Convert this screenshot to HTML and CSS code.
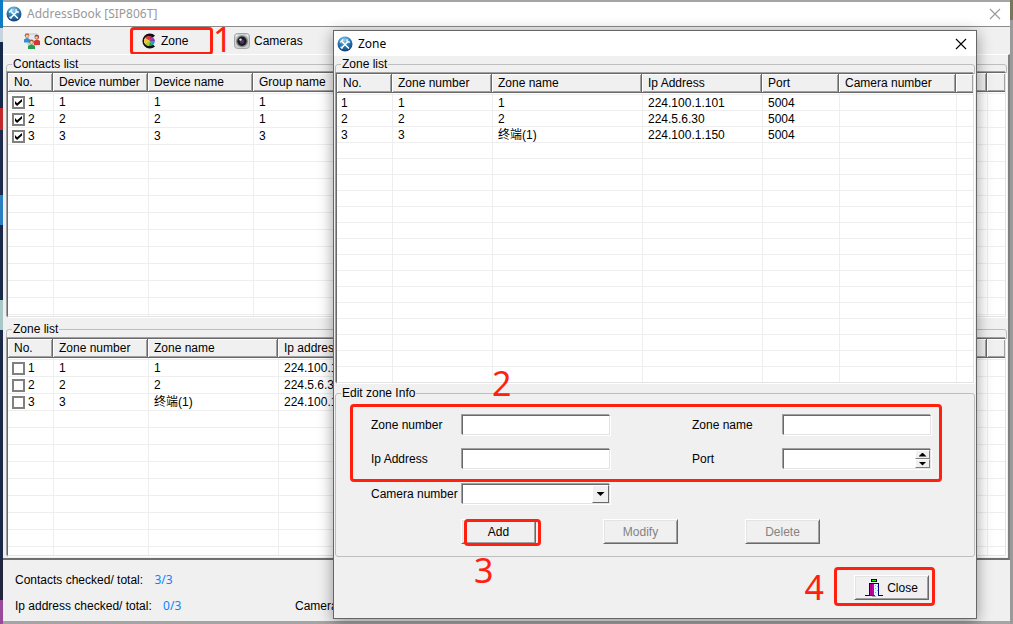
FILE: index.html
```html
<!DOCTYPE html>
<html lang="en">
<head>
<meta charset="utf-8">
<title>AddressBook [SIP806T]</title>
<link rel="stylesheet" href="styles.css">
</head>
<body class="desktop">
<svg width="0" height="0" class="defs" aria-hidden="true">
  <defs>
    <radialGradient id="ball" cx="45%" cy="25%" r="75%">
      <stop offset="0" stop-color="#8fd0ee"/><stop offset=".5" stop-color="#2f7fb8"/><stop offset="1" stop-color="#123f78"/>
    </radialGradient>
    <symbol id="app" viewBox="0 0 16 16">
      <circle cx="8" cy="8" r="7.5" fill="url(#ball)"/>
      <path d="M5 5.500l7 7M11.500 5L4.500 12" stroke="#fff" stroke-width="1.500"/>
      <path d="M3.200 6.400l3-3M10 3.200l.3 2.600 2.600.4M3.600 10.800l1.800 1.800" stroke="#e8f4fb" stroke-width="1.500" fill="none"/>
    </symbol>
    <symbol id="cross" viewBox="0 0 12 12">
      <path d="M1 1l10 10M11 1L1 11" stroke="currentColor" stroke-width="1.1" fill="none"/>
    </symbol>
  </defs>
</svg>

<main class="window">
  <header class="titlebar titlebar-main">
    <svg class="icon"><use href="#app"/></svg>
    <h1 class="title">AddressBook [SIP806T]</h1>
    <button class="x-button" aria-label="Close window"><svg class="cross"><use href="#cross"/></svg></button>
  </header>

  <nav class="toolbar">
    <button class="tool tool-contacts">
      <svg class="icon" viewBox="0 0 16 16">
        <path d="M4 1h9v11H4z" fill="#e4ebf0" stroke="#a9b2bb" stroke-width=".7"/>
        <circle cx="3" cy="2.600" r="2.300" fill="#b5653c"/><circle cx="3.200" cy="3.200" r="1.400" fill="#f4c49b"/>
        <path d="M0 9.500V6.500q3-3 6 0V9.500z" fill="#2f8fd0"/>
        <circle cx="12.800" cy="4" r="2.300" fill="#9a3d22"/><circle cx="12.600" cy="4.600" r="1.400" fill="#f4c49b"/>
        <path d="M10 12V8q3-3 6 0V12z" fill="#d3373a"/>
        <circle cx="7.500" cy="9" r="2.400" fill="#a8582f"/><circle cx="7.500" cy="9.600" r="1.500" fill="#f6cda8"/>
        <path d="M4 16v-3q3.500-3 7 0v3z" fill="#23a047"/>
      </svg>Contacts</button>
    <span class="mark mark-zone"><button class="tool">
      <svg class="icon" viewBox="0 0 16 16">
        <path d="M14 2.500A7.500 7.500 0 1 0 14 13.500L12 11.500H11A4.800 4.800 0 1 1 11 4.500H12Z" fill="#111"/>
        <path d="M8.500 8L4 5A5 5 0 0 1 8 3z" fill="#e23b2e"/>
        <path d="M8.500 8L8 3a5 5 0 0 1 4 1.500z" fill="#c2187e"/>
        <path d="M8.500 8L12 4.500A6 6 0 0 1 14 8z" fill="#7b3fa0"/>
        <path d="M8.500 8H14a6 6 0 0 1-2 4z" fill="#1ba0d0"/>
        <path d="M8.500 8l3.500 4a5 5 0 0 1-4 1z" fill="#23a35a"/>
        <path d="M8.500 8L8 13a5 5 0 0 1-4-2.500z" fill="#a5cc2c"/>
        <path d="M8.500 8L4 10.500A5 5 0 0 1 4 5z" fill="#f4c51e"/>
      </svg>Zone</button></span>
    <span class="digit digit-one">1</span>
    <button class="tool">
      <svg class="icon" viewBox="0 0 16 16">
        <rect x=".5" y=".5" width="15" height="15" rx="3" fill="#cfcfd0" stroke="#a4a4a6"/>
        <circle cx="8" cy="8.300" r="6" fill="#8a8a8e"/><circle cx="8" cy="8.300" r="4.700" fill="#1c1a24"/>
        <circle cx="8" cy="8.600" r="2.200" fill="#4c3a58"/><circle cx="6.500" cy="6.600" r="1.200" fill="#e8e8f0"/>
        <circle cx="13.500" cy="2.500" r=".8" fill="#fff"/><circle cx="2.500" cy="2.500" r=".8" fill="#fff"/>
      </svg>Cameras</button>
  </nav>

  <section class="panel">
    <fieldset class="group group-contacts">
      <legend>Contacts list</legend>
      <div class="list">
        <table class="grid">
          <colgroup><col class="w45"><col class="w95"><col class="w105"><col><col class="w18"></colgroup>
          <thead><tr><th>No.</th><th>Device number</th><th>Device name</th><th>Group name</th><th></th></tr></thead>
          <tbody>
            <tr><td><label class="check"><input type="checkbox" checked>1</label></td><td>1</td><td>1</td><td>1</td><td></td></tr>
            <tr><td><label class="check"><input type="checkbox" checked>2</label></td><td>2</td><td>2</td><td>1</td><td></td></tr>
            <tr><td><label class="check"><input type="checkbox" checked>3</label></td><td>3</td><td>3</td><td>3</td><td></td></tr>
            <tr class="rest"><td></td><td></td><td></td><td></td><td></td></tr>
          </tbody>
        </table>
      </div>
    </fieldset>
    <fieldset class="group group-zones">
      <legend>Zone list</legend>
      <div class="list">
        <table class="grid">
          <colgroup><col class="w45"><col class="w95"><col class="w130"><col><col class="w18"></colgroup>
          <thead><tr><th>No.</th><th>Zone number</th><th>Zone name</th><th>Ip address</th><th></th></tr></thead>
          <tbody>
            <tr><td><label class="check"><input type="checkbox">1</label></td><td>1</td><td>1</td><td>224.100.1.101</td><td></td></tr>
            <tr><td><label class="check"><input type="checkbox">2</label></td><td>2</td><td>2</td><td>224.5.6.30</td><td></td></tr>
            <tr><td><label class="check"><input type="checkbox">3</label></td><td>3</td><td>终端(1)</td><td>224.100.1.150</td><td></td></tr>
            <tr class="rest"><td></td><td></td><td></td><td></td><td></td></tr>
          </tbody>
        </table>
      </div>
    </fieldset>
  </section>

  <footer class="status">
    <p class="status-line">Contacts checked/ total: <span class="count">3/3</span></p>
    <div class="status-row">
      <p class="status-line status-ip">Ip address checked/ total: <span class="count">0/3</span></p>
      <p class="status-line">Cameras</p>
    </div>
  </footer>
</main>

<section class="dialog" role="dialog" aria-labelledby="dialog-title">
  <header class="titlebar">
    <svg class="icon"><use href="#app"/></svg>
    <h2 class="title" id="dialog-title">Zone</h2>
    <button class="x-button" aria-label="Close dialog"><svg class="cross"><use href="#cross"/></svg></button>
  </header>

  <fieldset class="group group-dialog">
    <legend>Zone list</legend>
    <div class="list list-tight">
      <table class="grid">
        <colgroup><col class="w55"><col class="w100"><col class="w150"><col class="w120"><col class="w77"><col class="w117"><col></colgroup>
        <thead><tr><th>No.</th><th>Zone number</th><th>Zone name</th><th>Ip Address</th><th>Port</th><th>Camera number</th><th></th></tr></thead>
        <tbody>
          <tr><td>1</td><td>1</td><td>1</td><td>224.100.1.101</td><td>5004</td><td></td><td></td></tr>
          <tr><td>2</td><td>2</td><td>2</td><td>224.5.6.30</td><td>5004</td><td></td><td></td></tr>
          <tr><td>3</td><td>3</td><td>终端(1)</td><td>224.100.1.150</td><td>5004</td><td></td><td></td></tr>
          <tr class="rest"><td></td><td></td><td></td><td></td><td></td><td></td><td></td></tr>
        </tbody>
      </table>
    </div>
  </fieldset>

  <fieldset class="group edit">
    <legend>Edit zone Info</legend>
    <span class="digit digit-two">2</span>
    <div class="mark mark-fields">
      <label for="zone-number">Zone number</label><input class="field" id="zone-number" type="text">
      <label class="second" for="zone-name">Zone name</label><input class="field" id="zone-name" type="text">
      <label for="ip">Ip Address</label><input class="field" id="ip" type="text">
      <label class="second" for="port">Port</label>
      <div class="field spinner">
        <input id="port" type="text">
        <span class="steps"><button class="step up" aria-label="Increase"></button><button class="step down" aria-label="Decrease"></button></span>
      </div>
    </div>
    <div class="camera-row">
      <label for="camera">Camera number</label>
      <div class="field combo"><select id="camera"></select><span class="arrow"></span></div>
    </div>
    <div class="actions">
      <div class="add-wrap">
        <button class="button">Add</button>
        <span class="mark mark-add"></span>
        <span class="digit digit-three">3</span>
      </div>
      <button class="button" disabled>Modify</button>
      <button class="button" disabled>Delete</button>
    </div>
  </fieldset>

  <footer class="dialog-foot">
    <span class="digit">4</span>
    <span class="mark mark-close"><button class="button button-icon">
      <svg class="door" viewBox="0 0 18 18" shape-rendering="crispEdges">
        <path d="M6 0h6v3H6z" fill="#000"/><path d="M7 1h4v1H7z" fill="#0f0"/>
        <path d="M4 4h10v12H4z" fill="#000080"/>
        <path d="M5 5h4v11H5z" fill="#c000a0"/><path d="M6 5h1v11H6z" fill="#80007c"/>
        <path d="M9 5h4v12H9z" fill="#d8f8ff"/><path d="M10 6h1v1h-1zM12 7h1v1h-1zM10 9h1v1h-1zM12 11h1v1h-1zM10 13h1v1h-1z" fill="#40d0e0"/>
        <path d="M0 16h5v1H0zM13 16h5v1h-5z" fill="#000080"/><path d="M5 16h5v1H5z" fill="#333"/><path d="M7 17h4v1H7z" fill="#aaa"/>
      </svg>Close</button></span>
  </footer>
</section>
</body>
</html>
```
FILE: styles.css
```css
* { box-sizing: border-box; }

.desktop {
  margin: 0;
  min-height: 100vh;
  display: flex;
  flex-direction: column;
  position: relative;
  padding: 2px 3px 3px;
  overflow: hidden;
  font: 12px/14px "Liberation Sans", "Noto Sans CJK SC", sans-serif;
  color: #000;
  background:
    linear-gradient(#0e7cc4 0 28px, #c8d4dc 28px 42px, #16284a 42px 108px, #c0282c 108px 130px, #1d2a4c 130px 195px, #2b7fc0 195px 225px, #1b2948 225px 300px, #a8c8c8 300px 330px, #1b2948 330px 560px, #22263a 560px 600px, #9a4a9a 600px) left / 3px 100% no-repeat,
    linear-gradient(#77765a 0 20px, #9a9a9a 20px) right / 3px 100% no-repeat,
    #a5a5a5;
}
.defs { position: absolute; }
button, input, select { font: inherit; color: inherit; margin: 0; }

.window {
  flex: 1;
  display: flex;
  flex-direction: column;
  background: #f0f0f0;
}
.titlebar {
  display: flex;
  align-items: center;
  gap: 5px;
  height: 25px;
  padding: 0 9px 0 3px;
  background: #fff;
}
.titlebar-main {
  color: #999;
  border-bottom: 1px solid #8c8c8c;
}
.icon { width: 16px; height: 16px; flex: none; }
.title {
  flex: 1;
  margin: 0;
  font: 12px/18px "Noto Sans", "Open Sans", sans-serif;
}
.x-button {
  display: flex;
  padding: 0;
  border: 0;
  background: none;
}
.cross { width: 12px; height: 12px; }

.toolbar {
  display: flex;
  align-items: center;
  height: 27px;
  padding-left: 21px;
}
.tool {
  display: flex;
  align-items: center;
  gap: 4px;
  padding: 0;
  border: 0;
  background: none;
}
.tool-contacts { width: 106px; }

/* Red callouts */
.mark {
  border: 3px solid #ff2010;
  border-radius: 4px;
}
.mark-zone {
  width: 83px;
  height: 28px;
  display: flex;
  align-items: center;
  padding-left: 8px;
}
.digit {
  font: 34px/34px "Noto Sans", sans-serif;
  color: #ff2010;
}
.digit-one { width: 21px; padding-bottom: 4px; }

.panel {
  flex: 1;
  display: flex;
  flex-direction: column;
  gap: 4px;
  padding: 2px 1px 1px 3px;
  border-top: 1px solid #fff;
  border-right: 2px solid #808080;
  border-bottom: 2px solid #707070;
}
.group {
  display: flex;
  flex-direction: column;
  min-width: 0;
  min-height: 0;
  margin: 0;
  padding: 2px 0 0;
  border: 1px solid #bebebe;
  border-radius: 3px;
}
.group legend {
  margin-left: 5px;
  padding: 0 1px;
}
.group-contacts { flex: 263 1 0; padding-top: 1px; }
.group-zones { flex: 235 1 0; }

.list {
  flex: 1;
  min-height: 0;
  border: 1px solid #696969;
  border-right-color: #e3e3e3;
  border-bottom-color: #e3e3e3;
  box-shadow: -1px -1px 0 #a0a0a0, 1px 1px 0 #fff;
  background: linear-gradient(#eee 1px, transparent 1px) 0 3px / 100% 17px #fff;
  display: flex;
}
.list-tight {
  background-position: 0 4px;
  background-size: 100% 16px;
}
.grid {
  width: 100%;
  table-layout: fixed;
  border-spacing: 0;
}
.grid th {
  height: 19px;
  padding: 0 5px 0 6px;
  text-align: left;
  font-weight: normal;
  white-space: nowrap;
  line-height: 18px;
  background: #f0f0f0;
  border-right: 1px solid #696969;
  border-bottom: 1px solid #696969;
  box-shadow: inset 1px 1px 0 #fff, inset -1px -1px 0 #a0a0a0;
}
.grid th:last-child { border-right: 0; }
.grid td {
  height: 17px;
  padding: 0 0 0 5px;
  line-height: 17px;
  white-space: nowrap;
  border-left: 1px solid #eee;
}
.grid td:first-child { border-left: 0; padding-left: 4px; }
.list-tight .grid td { height: 16px; line-height: 16px; }
.grid tbody tr:first-child td { height: 19px; padding-top: 2px; }
.list-tight .grid tbody tr:first-child td { height: 18px; }
.grid .rest td { height: auto; }
.w18 { width: 18px; }
.w45 { width: 45px; }
.w55 { width: 55px; }
.w77 { width: 77px; }
.w95 { width: 95px; }
.w100 { width: 100px; }
.w105 { width: 105px; }
.w117 { width: 117px; }
.w120 { width: 120px; }
.w130 { width: 130px; }
.w150 { width: 150px; }

.check {
  display: flex;
  align-items: center;
  gap: 3px;
}
.check input {
  appearance: none;
  width: 13px;
  height: 13px;
  border: 2px solid #808080;
  background: #fff;
}
.check input:checked::before {
  content: "";
  display: block;
  width: 7px;
  height: 7px;
  margin: 1px;
  background: #000;
  clip-path: polygon(0 30%, 30% 60%, 100% 0, 100% 35%, 30% 100%, 0 70%);
}

.status {
  display: flex;
  flex-direction: column;
  gap: 8px;
  padding: 11px 12px 6px;
}
.status-row { display: flex; }
.status-ip { width: 280px; }
.status-line { margin: 0; line-height: 18px; }
.count {
  margin-left: 8px;
  font-family: "Noto Sans", sans-serif;
  color: #0a84ff;
}

/* Dialog window floating over the main one */
.dialog {
  position: absolute;
  top: 30px;
  right: 36px;
  bottom: 5px;
  left: 333px;
  display: flex;
  flex-direction: column;
  background: #f0f0f0;
  border: 1px solid #666;
  box-shadow: 0 3px 14px rgba(0, 0, 0, .4);
}
.group-dialog { flex: 1; margin: 1px 1px 0; }
.edit {
  margin: 2px 1px 0;
  padding: 4px 32px 12px 14px;
  position: relative;
}
.edit legend { margin-left: -9px; }
.mark-fields {
  display: grid;
  grid-template-columns: 90px 150px minmax(0, 1fr) 90px 150px;
  row-gap: 12px;
  align-items: center;
  padding: 7px 7px 9px 18px;
}
.second { grid-column: 4; }
.field {
  height: 20px;
  margin: 1px;
  padding: 0 2px;
  min-width: 0;
  border: 1px solid #696969;
  border-right-color: #e3e3e3;
  border-bottom-color: #e3e3e3;
  border-radius: 0;
  box-shadow: -1px -1px 0 #a0a0a0, 1px 1px 0 #fff;
  background: #fff;
}
.spinner, .combo { display: flex; padding: 0; }
.spinner input {
  flex: 1;
  min-width: 0;
  border: 0;
  background: none;
}
.steps {
  display: flex;
  flex-direction: column;
  width: 15px;
}
.step {
  flex: 1;
  display: flex;
  align-items: center;
  justify-content: center;
  padding: 0;
  background: #f0f0f0;
  border: 1px solid #fff;
  border-right-color: #808080;
  border-bottom-color: #808080;
}
.up::before, .down::before, .arrow::before {
  content: "";
  width: 8px;
  height: 4px;
  background: #000;
  clip-path: polygon(0 0, 100% 0, 50% 100%);
}
.up::before { clip-path: polygon(50% 0, 100% 100%, 0 100%); }
.camera-row {
  display: grid;
  grid-template-columns: 90px 150px;
  align-items: center;
  margin-top: 1px;
  padding-left: 21px;
}
.camera-row label { white-space: nowrap; }
.combo { position: relative; }
.combo select {
  appearance: none;
  flex: 1;
  border: 0;
  background: none;
}
.arrow {
  position: absolute;
  inset: 0 0 0 auto;
  width: 17px;
  display: flex;
  align-items: center;
  justify-content: center;
  pointer-events: none;
  background: #f0f0f0;
  border: 1px solid #fff;
  border-right-color: #696969;
  border-bottom-color: #696969;
}
.actions {
  display: flex;
  gap: 67px;
  margin-top: 14px;
  padding-left: 111px;
}
.button {
  width: 75px;
  height: 25px;
  padding: 0;
  background: #f0f0f0;
  border: 1px solid #fff;
  border-right-color: #696969;
  border-bottom-color: #696969;
  box-shadow: inset 1px 1px 0 #e3e3e3, inset -1px -1px 0 #a0a0a0;
}
.button:disabled { color: #838383; }
.add-wrap { position: relative; }
.mark-add {
  position: absolute;
  inset: 0 -5px -2px 3px;
}
.digit-two {
  position: absolute;
  top: -34px;
  left: 156px;
}
.digit-three {
  position: absolute;
  top: 34px;
  left: 13px;
}
.dialog-foot {
  display: flex;
  align-items: center;
  justify-content: flex-end;
  gap: 10px;
  padding: 10px 41px 12px;
}
.mark-close {
  display: flex;
  padding: 5px 3px 3px 17px;
}
.button-icon {
  display: flex;
  align-items: center;
  justify-content: center;
  gap: 4px;
}
.door { width: 18px; height: 18px; }
```
